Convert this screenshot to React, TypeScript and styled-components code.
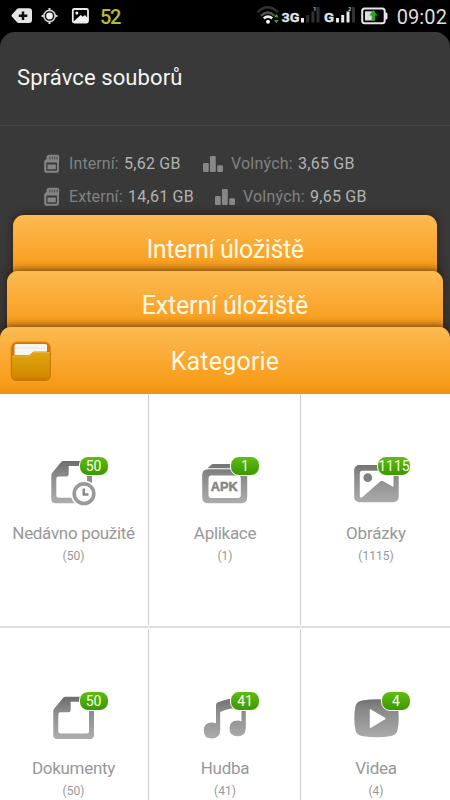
import React from 'react';
import styled, { createGlobalStyle } from 'styled-components';

const GlobalStyle = createGlobalStyle`
  * { box-sizing: border-box; }
  body { margin: 0; background: #000; font-family: Roboto, "Noto Sans", sans-serif; }
`;

const Screen = styled.div`
  width: 450px;
  height: 800px;
  overflow: hidden;
  display: flex;
  flex-direction: column;
  background: #000;
`;

const StatusBar = styled.header`
  height: 32px;
  flex: none;
  display: flex;
  align-items: center;
  justify-content: space-between;
  padding: 0 3px 0 10px;
  line-height: 32px;
`;

const StatusGroup = styled.div`
  display: flex;
  align-items: center;
  height: 32px;
`;

const BatteryPercent = styled.span`
  margin-left: 9px;
  padding-top: 1px;
  font-size: 20px;
  font-weight: 500;
  letter-spacing: -1.3px;
  color: #b9b92c;
`;

const Clock = styled.span`
  margin-left: 9px;
  padding-top: 1px;
  font-size: 20px;
  letter-spacing: 0.1px;
  color: #dedede;
`;

const Panel = styled.section`
  height: 362px;
  flex: none;
  display: flex;
  flex-direction: column;
  background: #393939;
  border-radius: 15px 15px 0 0;
  overflow: hidden;
`;

const Title = styled.h1`
  margin: 0;
  height: 94px;
  flex: none;
  padding: 1px 17px 0;
  border-bottom: 1px solid #464646;
  line-height: 90px;
  font-size: 22px;
  font-weight: 400;
  letter-spacing: 0.1px;
  color: #f4f4f4;
`;

const StorageList = styled.div`
  height: 89px;
  flex: none;
  padding: 21px 0 0 44px;
`;

const StorageRow = styled.div`
  display: flex;
  align-items: center;
  height: 33px;
  font-size: 16px;
  white-space: nowrap;
`;

const Label = styled.span<{ $width: number; $gap: number; $spacing: number }>`
  width: ${(p) => p.$width}px;
  margin-left: ${(p) => p.$gap}px;
  letter-spacing: ${(p) => p.$spacing}px;
  color: #828282;
`;

const Value = styled.span<{ $width: number }>`
  width: ${(p) => p.$width}px;
  letter-spacing: 0.25px;
  color: #b2b2b2;
`;

const Tab = styled.div<{ $inset: number; $spacing: number; $last?: boolean }>`
  position: relative;
  height: 67px;
  flex: none;
  margin: 0 ${(p) => p.$inset}px ${(p) => (p.$last ? 0 : -11)}px;
  border-radius: 11px 11px 0 0;
  background: linear-gradient(#fcbb51 0, #faa934 45%, #f79b17 88%, #ef920f 100%);
  box-shadow: 0 -1px 8px rgba(45, 22, 0, 0.75);
  color: #fff8e2;
  font-size: 25px;
  line-height: 70px;
  letter-spacing: ${(p) => p.$spacing}px;
  text-align: center;
`;

const FolderBadge = styled.div`
  position: absolute;
  left: 9px;
  top: 12px;
  width: 44px;
  height: 46px;
`;

const Grid = styled.main`
  flex: 1;
  display: grid;
  grid-template-columns: 149px 152px 149px;
  grid-template-rows: 235px 235px;
  background: #fff;
`;

const Cell = styled.div<{ $column: number; $top: boolean }>`
  position: relative;
  display: flex;
  flex-direction: column;
  align-items: center;
  padding: 60px ${(p) => (p.$column === 0 ? 2 : 0)}px 0 ${(p) => (p.$column === 2 ? 1 : 0)}px;
  border-bottom: ${(p) => (p.$top ? '1px solid #fff' : 'none')};
  color: #989898;

  &::before {
    content: '';
    position: absolute;
    display: ${(p) => (p.$column < 2 ? 'block' : 'none')};
    top: 0;
    bottom: ${(p) => (p.$top ? 3 : 0)}px;
    right: 0;
    width: 1px;
    background: #cfcfcf;
  }

  &::after {
    content: '';
    position: absolute;
    display: ${(p) => (p.$top ? 'block' : 'none')};
    left: 0;
    right: 0;
    bottom: 0;
    height: 2px;
    background: #dedede;
  }
`;

const IconBox = styled.div`
  position: relative;
  width: 76px;
  height: 52px;
  flex: none;
  svg { display: block; }
`;

const CountBadge = styled.span<{ $wide: boolean }>`
  position: absolute;
  right: 3px;
  top: 2px;
  width: ${(p) => (p.$wide ? 34 : 30)}px;
  height: 20px;
  display: flex;
  justify-content: center;
  border: 1px solid #fff;
  border-radius: 9px;
  background: linear-gradient(#60bd12, #3b9800);
  color: #f4ffe8;
  font-size: 14px;
  line-height: 18px;
`;

const Name = styled.div<{ $spacing: number }>`
  margin-top: 16px;
  font-size: 17px;
  line-height: 22px;
  letter-spacing: ${(p) => p.$spacing}px;
  white-space: nowrap;
`;

const Count = styled.div`
  margin-top: 4px;
  font-size: 12px;
  line-height: 16px;
`;

const NotificationIcons = () => (
  <svg width="81" height="32" viewBox="10 0 81 32">
    <path d="M12 14.500 17 9q.700-.700 2-.700h10q3 0 3 3V20q0 3-3 3H19q-1.300 0-2-.700l-5-5.500q-1.200-1.200 0-2.300Z" fill="#e5e5e5" />
    <path d="M23 11.500v8.500M18.800 15.800h8.500" stroke="#101010" strokeWidth="2.500" />
    <circle cx="49.500" cy="16" r="5.600" fill="none" stroke="#d5d5d5" strokeWidth="1.600" />
    <circle cx="49.500" cy="16" r="3.400" fill="#f2f2f2" />
    <path d="M49.500 8v3M49.500 21v3M41.500 16h3M54.500 16h3" stroke="#d5d5d5" strokeWidth="2" />
    <rect x="72.800" y="9" width="15.200" height="13.500" rx="1.500" fill="none" stroke="#e8e8e8" strokeWidth="1.800" />
    <path d="M73.500 21.500 80.800 15l2 1.800 2.200-1.800 3 3.500v4H73.500Z" fill="#f0f0f0" />
    <circle cx="76.800" cy="13" r="1.500" fill="#eee" />
  </svg>
);

const SignalIcons = () => (
  <svg width="132" height="32" viewBox="254 0 132 32" fontFamily="Roboto, sans-serif">
    <g fill="none" strokeWidth="2.300">
      <path d="M255.500 12.200q10-10 20.500 0" stroke="#333" />
      <path d="M259 15.700q7-6.500 13.500 0" stroke="#555" />
      <path d="M261.800 18.400q4-3.500 8.400 0" stroke="#eee" strokeWidth="2.700" />
    </g>
    <circle cx="266" cy="21.700" r="2" fill="#f4f4f4" />
    <path d="m274.400 14 2.300 3.200h-4.600Zm0 9.300 2.300-3.300h-4.600Z" fill="#43a526" />
    <text x="279.500" y="22.300" fontSize="13" fontWeight="700" fill="#e5e5e5" stroke="#e5e5e5" strokeWidth=".3" textLength="18" lengthAdjust="spacingAndGlyphs">3G</text>
    <path d="M299 18h3v4.500h-3Z" fill="#eee" />
    <path d="M304.200 15h3v7.500h-3ZM309.400 11.500h3v11h-3ZM314.500 7h3v15.500h-3Z" fill="#303030" />
    <text x="311" y="10.500" fontSize="6" fontWeight="700" fill="#bbb">1</text>
    <text x="322" y="22.300" fontSize="13" fontWeight="700" fill="#e5e5e5" stroke="#e5e5e5" strokeWidth=".3" textLength="10" lengthAdjust="spacingAndGlyphs">G</text>
    <path d="M334 18h3v4.500h-3ZM339.200 15h3v7.500h-3ZM344.500 11.500h3v11h-3Z" fill="#e8e8e8" />
    <path d="M350 7h3v15.500h-3Z" fill="#303030" />
    <text x="346" y="10.500" fontSize="6" fontWeight="700" fill="#bbb">2</text>
    <rect x="360.200" y="8.600" width="22.500" height="14.600" rx="2.500" fill="#050505" stroke="#e6e6e6" strokeWidth="2" />
    <path d="M383 12.500h1q1.500 0 1.500 1.500v4q0 1.500-1.500 1.500h-1Z" fill="#e6e6e6" />
    <path d="M363 11.300h9.500v9.200H363Z" fill="#ddd" />
    <path d="m371.200 10 4.300 5.500h-2.300v5h-3.500v-5h-2.500Z" fill="#2fa51d" />
  </svg>
);

const SdCard = () => (
  <svg width="16" height="20" viewBox="0 0 16 20">
    <path d="M5.500.7H13q2.200 0 2.200 2.200V6q0 1-.3 1.500v9.300q0 2-2 2H2.200q-2 0-2-2V7.500q0-1 .8-1.200L2.500 5V3.200Q2.500.7 5.500.7Z" fill="#858585" />
    <path d="M5.700 2.500v3M8.200 2.500v3M10.700 2.500v3M13 2.500v3" stroke="#393939" strokeWidth=".8" />
    <rect x="2.300" y="8.500" width="10.700" height="8.200" rx=".8" fill="#393939" />
    <rect x="3.500" y="10.500" width="8.300" height="4.800" fill="#858585" />
  </svg>
);

const Bars = () => (
  <svg width="20" height="16" viewBox="0 0 20 16" fill="#878787">
    <rect x="0" y="7" width="5.800" height="9" rx="1.300" />
    <rect x="7" y="0" width="5.800" height="16" rx="1.300" />
    <rect x="14.200" y="9.200" width="5.800" height="6.800" rx="1.300" />
  </svg>
);

const Folder = () => (
  <svg width="44" height="46" viewBox="0 0 44 46">
    <defs>
      <linearGradient id="folder" x2="0" y2="1">
        <stop offset="0" stopColor="#dda60d" />
        <stop offset=".85" stopColor="#d58a00" />
        <stop offset="1" stopColor="#c47500" />
      </linearGradient>
    </defs>
    <rect x="2" y="3" width="39.500" height="38.500" rx="6" fill="#d2730c" stroke="#e88a15" />
    <path d="M5.500 6.500q0-1.500 1.500-1.500h29.500q1.500 0 1.500 1.500V20H5.500Z" fill="#f7f5ef" />
    <path d="M5.500 9h32.500" stroke="#e2e0da" strokeWidth=".8" />
    <path d="M2.500 16.500h16.500q2 0 3-1.300l1-1q1-1.200 2.800-1.200h15.500v23q0 5.500-5.500 5.500H8q-5.500 0-5.500-5.500Z" fill="url(#folder)" stroke="#bd7900" strokeWidth=".8" />
    <path d="M3 17h16.200q2 0 3.200-1.500l1-1q1-1 2.600-1h14.800" fill="none" stroke="#edc04a" strokeWidth=".8" />
  </svg>
);

const CategorySvg = ({ children }: { children: React.ReactNode }) => (
  <svg width="76" height="52" viewBox="0 0 76 52">
    <defs>
      <linearGradient id="metal" gradientUnits="userSpaceOnUse" x1="0" y1="8" x2="0" y2="50">
        <stop offset="0" stopColor="#6c6c6c" />
        <stop offset=".3" stopColor="#888" />
        <stop offset="1" stopColor="#adadad" />
      </linearGradient>
    </defs>
    {children}
  </svg>
);

const docPath =
  'M29.500 7.700H54q4 0 4 4V46q0 4-4 4H21.300q-4 0-4-4V22q0-1.500 1-2.600L27 9q1-1.300 2.500-1.300ZM34.700 12.700V21q0 2.300-2.300 2.300H24.500q-2.200 0-2.200 2.200V42q0 2.500 2.500 2.500H50.500q2.500 0 2.500-2.500V12.700Z';

const RecentIcon = () => (
  <CategorySvg>
    <path d={docPath} transform="translate(-2 -.7)" fill="url(#metal)" fillRule="evenodd" />
    <circle cx="48" cy="39.700" r="13.200" fill="#fff" />
    <circle cx="48" cy="39.700" r="9.800" fill="#fff" stroke="#999" strokeWidth="3.600" />
    <path d="M47.800 34.500v6h4.700" fill="none" stroke="#8b8b8b" strokeWidth="2.600" />
  </CategorySvg>
);

const ApkIcon = () => (
  <CategorySvg>
    <path d="M20.500 14.300 24 11q1-1 2.500-1H52l4 4.300Z" fill="#777" />
    <path d="M21.200 15.300h33q6 0 6 6v22q0 6-6 6h-33q-6 0-6-6v-22q0-6 6-6Zm3.300 6.200q-3 0-3 3v16.500q0 3 3 3h26.300q3 0 3-3V24.500q0-3-3-3Z" fill="url(#metal)" fillRule="evenodd" />
    <text x="23.700" y="37.200" fontFamily="Liberation Sans, sans-serif" fontWeight="700" fontSize="13" fill="#858585" stroke="#858585" strokeWidth=".5" textLength="27" lengthAdjust="spacingAndGlyphs">APK</text>
  </CategorySvg>
);

const ImageIcon = () => (
  <CategorySvg>
    <rect x="16.200" y="11" width="44.500" height="37.300" rx="5" fill="url(#metal)" />
    <path d="M24.300 16.700h29q2.200 0 2.200 2.200V33L44.800 27q-1.300-.8-2.400.2L24.500 43q-2.700 2-2.700-1V19.200q0-2.500 2.500-2.500Z" fill="#fff" />
    <circle cx="29.800" cy="23.700" r="4.400" fill="#818181" />
  </CategorySvg>
);

const DocumentIcon = () => (
  <CategorySvg>
    <path d={docPath} fill="url(#metal)" fillRule="evenodd" />
  </CategorySvg>
);

const MusicIcon = () => (
  <CategorySvg>
    <path d="M29 16q0-2 2-2.700Q42 8.500 58.800 9V39q0 8.300-8.300 8.300-8 0-8-7.800 0-8 8-8 2.200 0 4 .9V18.500Q43 18.500 33.200 23v18q0 8.500-8.400 8.500-8 0-8-8 0-8 8-8 2.200 0 4.200 1Z" fill="url(#metal)" />
  </CategorySvg>
);

const VideoIcon = () => (
  <CategorySvg>
    <path d="M25 11.300q13.500-2 27 0 6 .8 7.500 5.700 2.500 12.300 0 24.600-1.500 4.900-7.500 5.700-13.500 2-27 0-6-.8-7.500-5.700-2.500-12.300 0-24.600Q19 12.100 25 11.300Z" fill="url(#metal)" />
    <path d="m33 20.500 14 8.200q1.300.8 0 1.600L33 38.700q-1.200.6-1.200-.8V21.300q0-1.400 1.200-.8Z" fill="#fff" />
  </CategorySvg>
);

const categories = [
  { name: 'Nedávno použité', count: 50, Icon: RecentIcon, spacing: -0.32 },
  { name: 'Aplikace', count: 1, Icon: ApkIcon, spacing: -0.3 },
  { name: 'Obrázky', count: 1115, Icon: ImageIcon, spacing: -0.15 },
  { name: 'Dokumenty', count: 50, Icon: DocumentIcon, spacing: -0.3 },
  { name: 'Hudba', count: 41, Icon: MusicIcon, spacing: -0.3 },
  { name: 'Videa', count: 4, Icon: VideoIcon, spacing: -0.3 },
];

const storages = [
  { label: 'Interní:', size: '5,62 GB', free: '3,65 GB', labelWidth: 55, sizeWidth: 79 },
  { label: 'Externí:', size: '14,61 GB', free: '9,65 GB', labelWidth: 59, sizeWidth: 87 },
];

export default function App() {
  return (
    <>
      <GlobalStyle />
      <Screen>
        <StatusBar>
          <StatusGroup>
            <NotificationIcons />
            <BatteryPercent>52</BatteryPercent>
          </StatusGroup>
          <StatusGroup>
            <SignalIcons />
            <Clock>09:02</Clock>
          </StatusGroup>
        </StatusBar>
        <Panel>
          <Title>Správce souborů</Title>
          <StorageList>
            {storages.map((s) => (
              <StorageRow key={s.label}>
                <SdCard />
                <Label $width={s.labelWidth} $gap={9} $spacing={0.1}>{s.label}</Label>
                <Value $width={s.sizeWidth}>{s.size}</Value>
                <Bars />
                <Label $width={67} $gap={8} $spacing={0.2}>Volných:</Label>
                <Value $width={60}>{s.free}</Value>
              </StorageRow>
            ))}
          </StorageList>
          <Tab $inset={13} $spacing={-0.4}>Interní úložiště</Tab>
          <Tab $inset={7} $spacing={-0.2}>Externí úložiště</Tab>
          <Tab $inset={0} $spacing={0.2} $last>
            <FolderBadge><Folder /></FolderBadge>
            Kategorie
          </Tab>
        </Panel>
        <Grid>
          {categories.map(({ name, count, Icon, spacing }, i) => (
            <Cell key={name} $column={i % 3} $top={i < 3}>
              <IconBox>
                <Icon />
                <CountBadge $wide={count > 999}>{count}</CountBadge>
              </IconBox>
              <Name $spacing={spacing}>{name}</Name>
              <Count>({count})</Count>
            </Cell>
          ))}
        </Grid>
      </Screen>
    </>
  );
}
